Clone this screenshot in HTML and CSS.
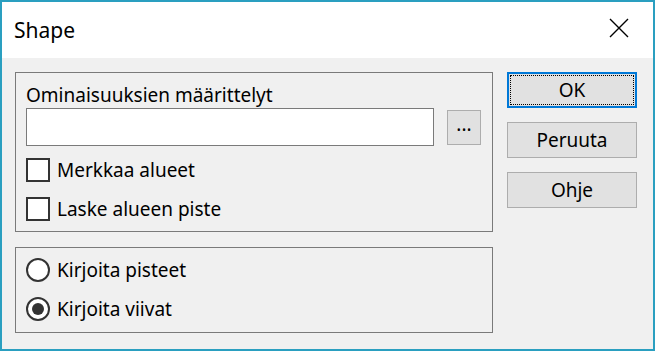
FILE: index.html
```html
<!DOCTYPE html>
<html lang="fi">
<head>
    <meta charset="UTF-8">
    <title>Shape</title>
    <link rel="stylesheet" href="styles.css">
</head>
<body>

<div class="window">
    <div class="titlebar">
        <span class="title">Shape</span>
        <svg class="close" width="20" height="20" viewBox="0 0 20 20">
            <path d="M1 1 L19 19 M19 1 L1 19" stroke="#000" stroke-width="1.4" fill="none"/>
        </svg>
    </div>

    <div class="client">
        <div class="groups">
            <div class="group group-top">
                <div class="label">Ominaisuuksien määrittelyt</div>
                <div class="file-row">
                    <input type="text" class="textbox">
                    <button class="browse">...</button>
                </div>
                <div class="option-list">
                    <div class="option">
                        <span class="checkbox"></span>
                        <span>Merkkaa alueet</span>
                    </div>
                    <div class="option">
                        <span class="checkbox"></span>
                        <span>Laske alueen piste</span>
                    </div>
                </div>
            </div>

            <div class="group group-bottom">
                <div class="option-list">
                    <div class="option">
                        <span class="radio"></span>
                        <span>Kirjoita pisteet</span>
                    </div>
                    <div class="option">
                        <span class="radio checked"></span>
                        <span>Kirjoita viivat</span>
                    </div>
                </div>
            </div>
        </div>

        <div class="buttons">
            <button class="btn btn-default"><span class="focus">OK</span></button>
            <button class="btn">Peruuta</button>
            <button class="btn">Ohje</button>
        </div>
    </div>
</div>

</body>
</html>
```

FILE: styles.css
```css
* {
    box-sizing: border-box;
}

body {
    margin: 0;
    padding: 0;
    font-family: 'Noto Sans', 'Open Sans', sans-serif;
    font-size: 19px;
    color: #000;
    background-color: #fff;
}

.window {
    width: 655px;
    height: 351px;
    border: 2px solid #2a9fc0;
    background-color: #f0f0f0;
    display: flex;
    flex-direction: column;
}

.titlebar {
    height: 56px;
    background-color: #fff;
    display: flex;
    align-items: center;
    justify-content: space-between;
    padding: 0 24px 0 12px;
}

.title {
    font-size: 21px;
}

.close {
    display: block;
    margin-top: -4px;
}

.client {
    flex: 1;
    display: flex;
    padding: 14px 16px 0 13px;
}

.groups {
    width: 478px;
    display: flex;
    flex-direction: column;
    gap: 15px;
}

.group {
    border: 1px solid #7a7a7a;
    padding: 10px 10px;
}

.group-bottom {
    padding-bottom: 11px;
}

.label {
    height: 24px;
    line-height: 24px;
    margin-bottom: 1px;
}

.file-row {
    display: flex;
    align-items: center;
    height: 38px;
    margin-bottom: 12px;
}

.textbox {
    width: 408px;
    height: 38px;
    border: 1px solid #7a7a7a;
    background: #fff;
    margin: 0;
}

.browse {
    width: 34px;
    height: 35px;
    margin-left: 13px;
    padding: 0 0 6px;
    border: 1px solid #adadad;
    background-color: #e1e1e1;
    font-family: inherit;
    font-size: 19px;
    line-height: 1;
}

.option-list {
    display: flex;
    flex-direction: column;
    gap: 15px;
}

.option {
    display: flex;
    align-items: center;
    height: 24px;
    gap: 7px;
}

.checkbox {
    width: 24px;
    height: 24px;
    border: 2px solid #333;
    background-color: #fff;
}

.radio {
    width: 24px;
    height: 24px;
    border: 2px solid #333;
    border-radius: 50%;
    background-color: #fff;
    display: flex;
    align-items: center;
    justify-content: center;
}

.radio.checked::after {
    content: "";
    width: 12px;
    height: 12px;
    border-radius: 50%;
    background-color: #333;
}

.buttons {
    margin-left: 14px;
    width: 130px;
    display: flex;
    flex-direction: column;
    gap: 14px;
}

.btn {
    height: 36px;
    border: 1px solid #adadad;
    background-color: #e1e1e1;
    font-family: inherit;
    font-size: 19px;
    color: #000;
    padding: 0;
}

.btn-default {
    border: 2px solid #0078d7;
    padding: 1px;
}

.focus {
    display: flex;
    align-items: center;
    justify-content: center;
    height: 100%;
    border: 1px dotted #000;
}
```
